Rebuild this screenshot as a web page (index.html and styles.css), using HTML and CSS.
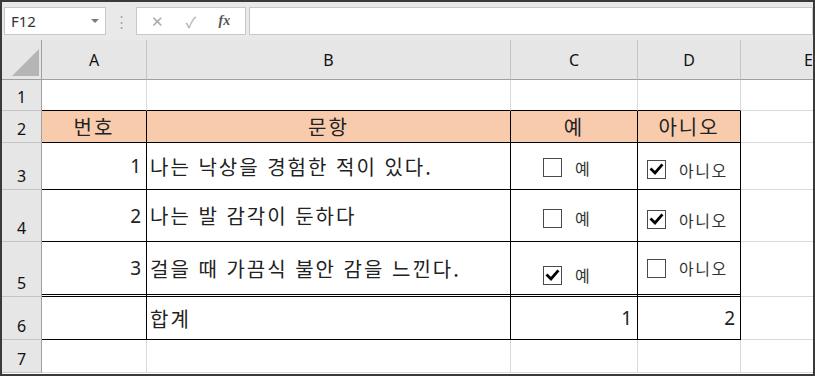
FILE: index.html
```html
<!DOCTYPE html>
<html lang="ko">
<head>
  <meta charset="UTF-8">
  <meta name="viewport" content="width=device-width, initial-scale=1.0">
  <title>설문 - 시트</title>
  <link rel="stylesheet" href="styles.css">
</head>
<body>
  <div class="frame">
    <!-- 수식 입력줄 -->
    <div class="bar">
      <div class="name-box">
        <span>F12</span>
        <span class="caret"></span>
      </div>
      <div class="grip">⋮</div>
      <div class="func-box">
        <span class="fn-btn">✕</span>
        <span class="fn-btn">✓</span>
        <span class="fn-btn fx">fx</span>
      </div>
      <div class="formula"></div>
    </div>

    <div class="sheet">
      <!-- 열 머리글 -->
      <div class="corner"><span class="corner-tri"></span></div>
      <div class="ch">A</div>
      <div class="ch">B</div>
      <div class="ch">C</div>
      <div class="ch">D</div>
      <div class="ch">E</div>

      <!-- 1 -->
      <div class="rh">1</div>
      <div class="c top"></div>
      <div class="c top"></div>
      <div class="c top"></div>
      <div class="c top"></div>
      <div class="c"></div>

      <!-- 2 -->
      <div class="rh">2</div>
      <div class="c t head">번호</div>
      <div class="c t head">문항</div>
      <div class="c t head">예</div>
      <div class="c t head">아니오</div>
      <div class="c"></div>

      <!-- 3 -->
      <div class="rh">3</div>
      <div class="c t num">1</div>
      <div class="c t txt">나는 낙상을 경험한 적이 있다.</div>
      <div class="c t yes dy-3">
        <label class="ctl"><svg class="box" viewBox="0 0 19 19"><rect x="0.5" y="0.5" width="18" height="18"/></svg><span>예</span></label>
      </div>
      <div class="c t no dy-7">
        <label class="ctl"><svg class="box" viewBox="0 0 19 19"><rect x="0.5" y="0.5" width="18" height="18"/><path class="tick" d="M4.5 9.5 L8 13 L14.5 5.5"/></svg><span>아니오</span></label>
      </div>
      <div class="c"></div>

      <!-- 4 -->
      <div class="rh">4</div>
      <div class="c t num">2</div>
      <div class="c t txt">나는 발 감각이 둔하다</div>
      <div class="c t yes dy-5">
        <label class="ctl"><svg class="box" viewBox="0 0 19 19"><rect x="0.5" y="0.5" width="18" height="18"/></svg><span>예</span></label>
      </div>
      <div class="c t no dy-8">
        <label class="ctl"><svg class="box" viewBox="0 0 19 19"><rect x="0.5" y="0.5" width="18" height="18"/><path class="tick" d="M4.5 9.5 L8 13 L14.5 5.5"/></svg><span>아니오</span></label>
      </div>
      <div class="c"></div>

      <!-- 5 -->
      <div class="rh">5</div>
      <div class="c t num dbl">3</div>
      <div class="c t txt dbl">걸을 때 가끔식 불안 감을 느낀다.</div>
      <div class="c t yes dbl dy-14">
        <label class="ctl"><svg class="box" viewBox="0 0 19 19"><rect x="0.5" y="0.5" width="18" height="18"/><path class="tick" d="M4.5 9.5 L8 13 L14.5 5.5"/></svg><span>예</span></label>
      </div>
      <div class="c t no dbl">
        <label class="ctl"><svg class="box" viewBox="0 0 19 19"><rect x="0.5" y="0.5" width="18" height="18"/></svg><span>아니오</span></label>
      </div>
      <div class="c"></div>

      <!-- 6 -->
      <div class="rh">6</div>
      <div class="c t"></div>
      <div class="c t txt">합계</div>
      <div class="c t num">1</div>
      <div class="c t num">2</div>
      <div class="c"></div>

      <!-- 7 -->
      <div class="rh">7</div>
      <div class="c"></div>
      <div class="c"></div>
      <div class="c"></div>
      <div class="c"></div>
      <div class="c"></div>
    </div>
  </div>
</body>
</html>
```

FILE: styles.css
```css
html, body {
  margin: 0;
  padding: 0;
  overflow: hidden;
}
body {
  font-family: 'Noto Sans', 'Noto Sans CJK KR', sans-serif;
  color: #000;
  background: #fff;
}
.frame {
  width: 815px;
  height: 376px;
  border: 2px solid #3a3a3a;
  box-sizing: border-box;
  overflow: hidden;
  background: #fff;
}

/* formula bar */
.bar {
  display: flex;
  height: 38px;
  box-sizing: border-box;
  padding: 5px 0 0 2px;
  background: #e9e9e9;
}
.name-box, .func-box, .formula {
  height: 28px;
  box-sizing: border-box;
  background: #fff;
  border: 1px solid #c8c8c8;
}
.name-box {
  width: 102px;
  display: flex;
  align-items: center;
  justify-content: space-between;
  padding: 0 6px 0 6px;
  font-size: 15px;
  color: #333;
}
.caret {
  width: 0;
  height: 0;
  border-left: 4px solid transparent;
  border-right: 4px solid transparent;
  border-top: 4px solid #7a7a7a;
}
.grip {
  width: 30px;
  text-align: center;
  color: #a8a8a8;
  font-size: 15px;
  line-height: 28px;
}
.func-box {
  width: 110px;
  display: flex;
  align-items: center;
  justify-content: space-around;
  padding: 0 4px;
}
.fn-btn {
  color: #a9a9a9;
  font-size: 15px;
  width: 28px;
  text-align: center;
}
.fx {
  font-family: 'Liberation Serif', serif;
  font-style: italic;
  font-weight: bold;
  color: #555;
  font-size: 14px;
}
.formula {
  flex: 1;
  margin-left: 3px;
}

/* sheet grid */
.sheet {
  display: grid;
  grid-template-columns: 40px 105px 364px 127px 103px 136px;
  grid-template-rows: 40px 31px 32px 47px 52px 55px 43px 33px;
}
.sheet > div {
  box-sizing: border-box;
  min-width: 0;
}
.corner, .ch, .rh {
  background: #e6e6e6;
  color: #111;
  font-size: 16px;
}
.corner {
  border-right: 1px solid #a0a0a0;
  border-bottom: 1px solid #a0a0a0;
  display: flex;
  align-items: flex-end;
  justify-content: flex-end;
  padding: 0 2px 3px 0;
}
.corner-tri {
  width: 0;
  height: 0;
  border-left: 27px solid transparent;
  border-bottom: 27px solid #b5b5b5;
}
.ch {
  display: flex;
  align-items: center;
  justify-content: center;
  border-right: 1px solid #c4c4c4;
  border-bottom: 1px solid #a0a0a0;
}
.rh {
  display: flex;
  align-items: flex-end;
  justify-content: center;
  padding-bottom: 3px;
  line-height: 20px;
  border-right: 1px solid #a0a0a0;
  border-bottom: 1px solid #c4c4c4;
}
.c {
  border-right: 1px solid #dadada;
  border-bottom: 1px solid #dadada;
  display: flex;
  align-items: center;
  font-family: 'Noto Sans CJK KR', sans-serif;
  font-size: 20px;
  letter-spacing: 2px;
  white-space: nowrap;
  overflow: hidden;
}
.c.top {
  border-bottom-color: #000;
}
.c.t {
  border-right-color: #000;
  border-bottom-color: #000;
}
.c.dbl {
  border-bottom: 3px double #000;
}
.c.head {
  background: #f8cbad;
  justify-content: center;
  color: #222;
}
.c.txt {
  padding-left: 3px;
  color: #222;
}
.c.num {
  justify-content: flex-end;
  padding-right: 5px;
  font-family: 'Noto Sans', sans-serif;
  font-size: 19px;
  letter-spacing: 0;
  color: #222;
}

/* check box controls */
.c.yes {
  padding-left: 32px;
}
.c.no {
  padding-left: 9px;
}
.dy-3 { padding-top: 3px; }
.dy-5 { padding-top: 5px; }
.dy-7 { padding-top: 7px; }
.dy-8 { padding-top: 8px; }
.dy-14 { padding-top: 14px; }
.ctl {
  display: flex;
  align-items: center;
  gap: 13px;
  font-size: 16px;
  letter-spacing: 1.5px;
  color: #333;
}
.box {
  width: 19px;
  height: 19px;
  flex: none;
}
.box rect {
  fill: #fff;
  stroke: #4a4a4a;
  stroke-width: 1;
}
.box .tick {
  fill: none;
  stroke: #000;
  stroke-width: 2.8;
  stroke-linecap: square;
}
```
